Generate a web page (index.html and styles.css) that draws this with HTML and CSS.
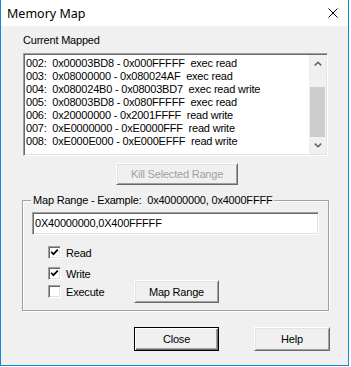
FILE: index.html
```html
<!DOCTYPE html>
<html lang="en">
<head>
    <meta charset="UTF-8">
    <title>Memory Map</title>
    <link rel="stylesheet" href="styles.css">
</head>
<body>
    <div class="window">
        <div class="titlebar">
            <span class="title">Memory Map</span>
            <svg class="close-x" width="10" height="10" viewBox="0 0 10 10">
                <path d="M0.5 0.5 L9.5 9.5 M9.5 0.5 L0.5 9.5" stroke="#000" stroke-width="1" fill="none"/>
            </svg>
        </div>

        <div class="client">
            <div class="caption">Current Mapped</div>

            <div class="listbox">
                <div class="list-items">
                    <div class="item">002:  0x00003BD8 - 0x000FFFFF  exec read</div>
                    <div class="item">003:  0x08000000 - 0x080024AF  exec read</div>
                    <div class="item">004:  0x080024B0 - 0x08003BD7  exec read write</div>
                    <div class="item">005:  0x08003BD8 - 0x080FFFFF  exec read</div>
                    <div class="item">006:  0x20000000 - 0x2001FFFF  read write</div>
                    <div class="item">007:  0xE0000000 - 0xE0000FFF  read write</div>
                    <div class="item">008:  0xE000E000 - 0xE000EFFF  read write</div>
                </div>
                <div class="scrollbar">
                    <div class="sb-btn">
                        <svg width="8" height="5" viewBox="0 0 8 5"><polyline points="0.8,4.4 4,1.2 7.2,4.4" stroke="#606060" stroke-width="1.5" fill="none"/></svg>
                    </div>
                    <div class="sb-track"><div class="sb-thumb"></div></div>
                    <div class="sb-btn">
                        <svg width="8" height="5" viewBox="0 0 8 5"><polyline points="0.8,0.6 4,3.8 7.2,0.6" stroke="#606060" stroke-width="1.5" fill="none"/></svg>
                    </div>
                </div>
            </div>

            <button class="btn btn-kill" disabled>Kill Selected Range</button>

            <fieldset class="group">
                <legend>Map Range - Example:  0x40000000, 0x4000FFFF</legend>
                <div class="edit">0X40000000,0X400FFFFF</div>
                <div class="checks">
                    <label class="check">
                        <span class="box"><svg width="9" height="9" viewBox="0 0 9 9"><polyline points="1.2,3.8 3.4,6.2 7.8,1.6" stroke="#000" stroke-width="1.7" fill="none"/></svg></span>
                        Read
                    </label>
                    <label class="check">
                        <span class="box"><svg width="9" height="9" viewBox="0 0 9 9"><polyline points="1.2,3.8 3.4,6.2 7.8,1.6" stroke="#000" stroke-width="1.7" fill="none"/></svg></span>
                        Write
                    </label>
                    <div class="check-row">
                        <label class="check">
                            <span class="box"></span>
                            Execute
                        </label>
                        <button class="btn btn-map">Map Range</button>
                    </div>
                </div>
            </fieldset>

            <div class="actions">
                <button class="btn btn-default btn-close">Close</button>
                <button class="btn btn-help">Help</button>
            </div>
        </div>
    </div>
</body>
</html>
```

FILE: styles.css
```css
body {
    margin: 0;
    background-color: #fff;
    font-family: "Liberation Sans", Arial, sans-serif;
    font-size: 11px;
    letter-spacing: -0.2px;
    color: #000;
}
.window {
    width: 349px;
    height: 366px;
    box-sizing: border-box;
    border: 1px solid #1883d7;
    border-top: none;
    background-color: #f0f0f0;
    display: flex;
    flex-direction: column;
}
.titlebar {
    height: 26px;
    flex-shrink: 0;
    background-color: #fff;
    display: flex;
    align-items: center;
}
.title {
    font-family: "Noto Sans", "Liberation Sans", sans-serif;
    font-size: 12.5px;
    letter-spacing: 0;
    padding: 1px 0 0 6px;
}
.close-x {
    margin-left: auto;
    margin-right: 10px;
}
.client {
    flex: 1;
    padding: 8px 0 0 22px;
}
.caption {
    line-height: 13px;
}

/* sunken 3d frame shared by list and edit */
.listbox,
.edit {
    box-sizing: border-box;
    border: 1px solid;
    border-color: #a0a0a0 #fff #fff #a0a0a0;
    box-shadow: inset 1px 1px 0 #696969, inset -1px -1px 0 #e3e3e3;
    background-color: #fff;
}
.listbox {
    margin-top: 6px;
    width: 305px;
    height: 103px;
    padding: 1px;
    display: flex;
}
.list-items {
    flex: 1;
    padding: 2px 0 0 1px;
    overflow: hidden;
}
.item {
    line-height: 13px;
    white-space: pre;
}
.scrollbar {
    width: 17px;
    display: flex;
    flex-direction: column;
    background-color: #f0f0f0;
}
.sb-btn {
    height: 17px;
    display: flex;
    align-items: center;
    justify-content: center;
}
.sb-track {
    flex: 1;
    padding-top: 15px;
}
.sb-thumb {
    height: 50px;
    margin: 0 1px;
    background-color: #cdcdcd;
}

.btn {
    display: block;
    box-sizing: border-box;
    padding: 0;
    font: inherit;
    letter-spacing: inherit;
    color: #000;
    background-color: #f0f0f0;
    border: 1px solid;
    border-color: #fff #696969 #696969 #fff;
    box-shadow: inset 1px 1px 0 #e3e3e3, inset -1px -1px 0 #a0a0a0;
}
.btn-kill {
    margin: 7px 0 0 93px;
    width: 122px;
    height: 22px;
    color: #a0a0a0;
}
.btn-default {
    border: 1px solid #000;
    box-shadow: inset 1px 1px 0 #fff, inset -1px -1px 0 #696969, inset -2px -2px 0 #a0a0a0;
}

.group {
    margin: 9px 0 0 -1px;
    width: 307px;
    box-sizing: border-box;
    border: 1px solid #a0a0a0;
    box-shadow: inset 1px 1px 0 #fff, 1px 1px 0 #fff;
    padding: 0 8px 7px 8px;
    min-width: 0;
}
.group legend {
    padding: 0 2px;
    line-height: 13px;
    white-space: pre;
    background-color: #f0f0f0;
}
.edit {
    margin: 5px 0 0 1px;
    width: 287px;
    height: 23px;
    padding: 0 0 0 2px;
    line-height: 21px;
}
.checks {
    margin-top: 11px;
    padding-left: 17px;
}
.check {
    display: flex;
    align-items: center;
    height: 13px;
    width: 86px;
}
.check + .check {
    margin-top: 8px;
}
.box {
    width: 13px;
    height: 13px;
    box-sizing: border-box;
    margin-right: 5px;
    border: 1px solid;
    border-color: #a0a0a0 #fff #fff #a0a0a0;
    box-shadow: inset 1px 1px 0 #696969, inset -1px -1px 0 #e3e3e3;
    background-color: #fff;
    display: flex;
    align-items: center;
    justify-content: center;
}
.box svg {
    display: block;
}
.check-row {
    display: flex;
    align-items: center;
    height: 23px;
}
.btn-map {
    width: 85px;
    height: 23px;
}

.actions {
    display: flex;
    align-items: flex-start;
    gap: 35px;
    margin: 16px 0 0 111px;
}
.btn-close {
    width: 85px;
    height: 24px;
}
.btn-help {
    width: 76px;
    height: 24px;
}
```
